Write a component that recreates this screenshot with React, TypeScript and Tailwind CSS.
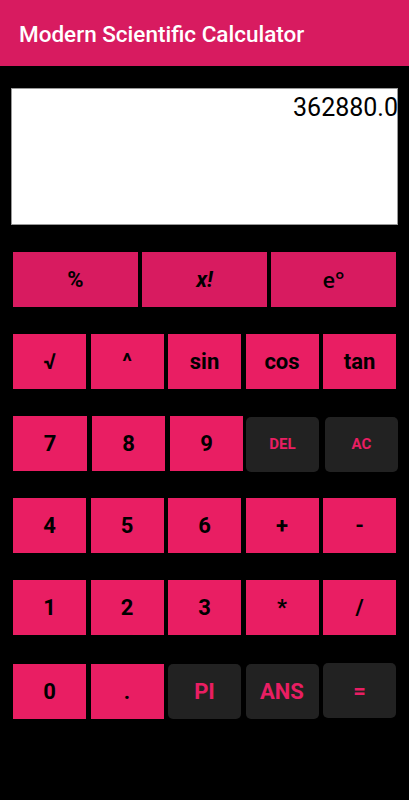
import React from 'react';

const pink = 'bg-[#E91E63] text-black font-bold text-[22px]';
const dark = 'bg-[#222222] text-[#E91E63] font-bold rounded-[5px]';

function Key({ label, className = '' }: { label: string; className?: string }) {
  return (
    <button
      type="button"
      className={`flex items-center justify-center h-[55px] ${className}`}
    >
      {label}
    </button>
  );
}

export default function App() {
  return (
    <div
      className="w-[409px] h-[800px] bg-black flex flex-col"
      style={{ fontFamily: 'Roboto, "Liberation Sans", sans-serif' }}
    >
      <div className="h-[66px] bg-[#D81B60] flex items-center px-[19px] pt-[4px] shrink-0">
        <h1 className="text-white text-[22.5px] font-medium">Modern Scientific Calculator</h1>
      </div>

      <div className="mt-[22px] mx-[11px] h-[137px] bg-white border border-[#999] flex justify-end items-start">
        <span className="text-[25px] text-black leading-[29px] mt-[4px] -mr-px">362880.0</span>
      </div>

      <div className="flex flex-col px-[13px]">
        {/* row 1 */}
        <div className="flex gap-[4px] mt-[27px]">
          <Key label="%" className="flex-1 bg-[#D81B60] text-black font-bold text-[22px]" />
          <Key label="x!" className="flex-1 bg-[#D81B60] text-black font-bold italic text-[22px]" />
          <Key
            label="e°"
            className="flex-1 bg-[#D81B60] text-black font-semibold text-[22px] font-['Open_Sans',sans-serif]"
          />
        </div>

        {/* row 2 */}
        <div className="flex gap-[4.5px] mt-[27px]">
          <Key label="√" className={`flex-1 ${pink}`} />
          <Key label="^" className={`flex-1 ${pink} text-[18px]`} />
          <Key label="sin" className={`flex-1 ${pink}`} />
          <Key label="cos" className={`flex-1 ${pink}`} />
          <Key label="tan" className={`flex-1 ${pink}`} />
        </div>

        {/* row 3 */}
        <div className="flex mt-[27px]">
          <Key label="7" className={`w-[74px] shrink-0 ${pink}`} />
          <Key label="8" className={`w-[73px] shrink-0 ml-[5px] ${pink}`} />
          <Key label="9" className={`w-[73px] shrink-0 ml-[5px] ${pink}`} />
          <Key label="DEL" className={`w-[73px] shrink-0 ml-[3px] mt-px ${dark} text-[15px]`} />
          <Key label="AC" className={`w-[73px] shrink-0 ml-[6px] mt-px ${dark} text-[15px]`} />
        </div>

        {/* row 4 */}
        <div className="flex gap-[4.5px] mt-[26px]">
          <Key label="4" className={`flex-1 ${pink}`} />
          <Key label="5" className={`flex-1 ${pink}`} />
          <Key label="6" className={`flex-1 ${pink}`} />
          <Key label="+" className={`flex-1 ${pink}`} />
          <Key label="-" className={`flex-1 ${pink}`} />
        </div>

        {/* row 5 */}
        <div className="flex gap-[4.5px] mt-[27px]">
          <Key label="1" className={`flex-1 ${pink}`} />
          <Key label="2" className={`flex-1 ${pink}`} />
          <Key label="3" className={`flex-1 ${pink}`} />
          <Key label="*" className={`flex-1 ${pink}`} />
          <Key label="/" className={`flex-1 ${pink}`} />
        </div>

        {/* row 6 */}
        <div className="flex gap-[4.5px] mt-[28px] items-start">
          <Key label="0" className={`flex-1 ${pink} mt-px`} />
          <Key label="." className={`flex-1 ${pink} mt-px`} />
          <Key label="PI" className={`flex-1 ${dark} text-[22px] mt-px`} />
          <Key label="ANS" className={`flex-1 ${dark} text-[22px] mt-px`} />
          <Key label="=" className={`flex-1 ${dark} text-[22px]`} />
        </div>
      </div>
    </div>
  );
}
